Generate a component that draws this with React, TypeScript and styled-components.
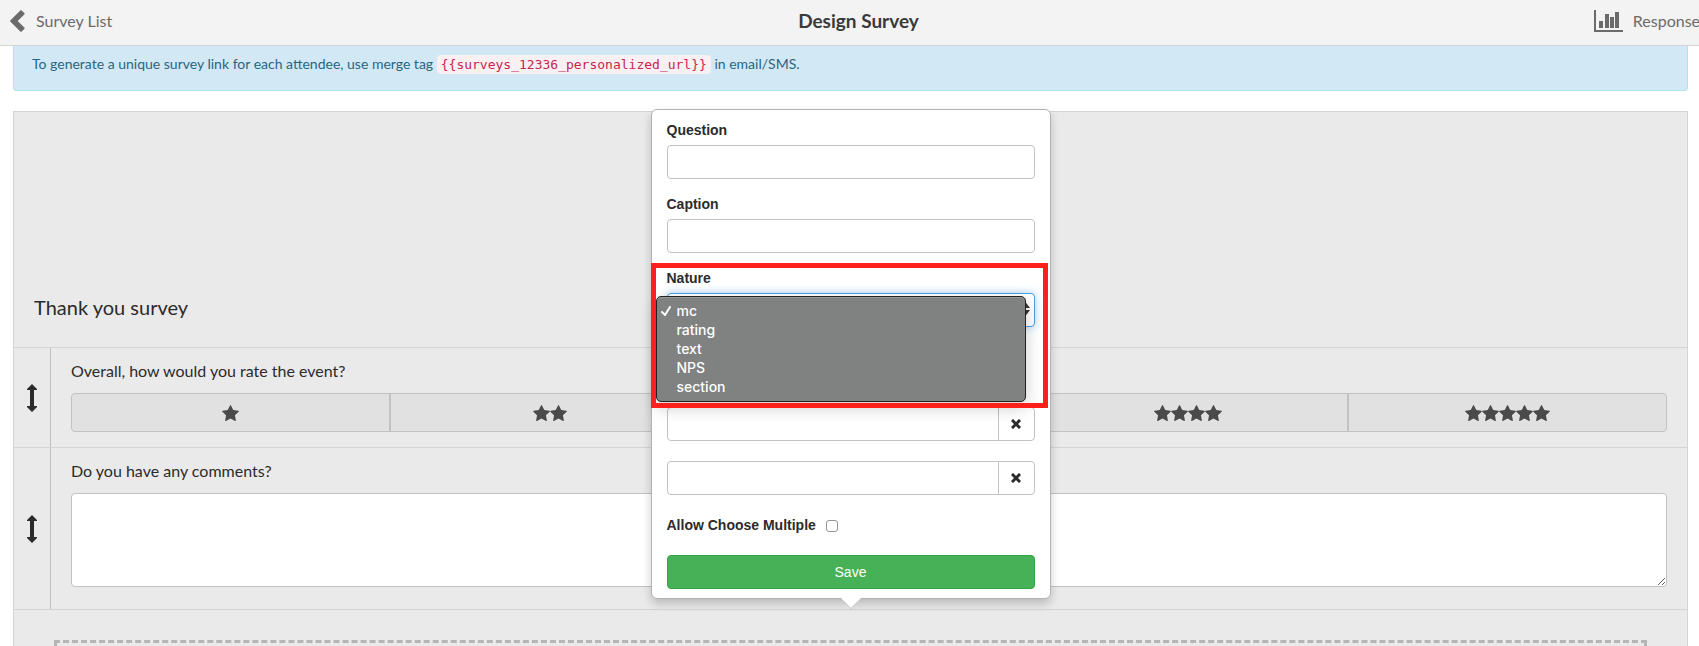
import React from 'react';
import styled, { createGlobalStyle, css } from 'styled-components';

const GlobalStyle = createGlobalStyle`
  *, *::before, *::after { box-sizing: border-box; }
  body {
    margin: 0;
    background: #fff;
    color: #2b2b2b;
    font-family: Lato, "Liberation Sans", sans-serif;
    font-size: 16px;
    line-height: 20px;
  }
`;

const Page = styled.div`
  height: 100vh;
  overflow: hidden;
  display: flex;
  flex-direction: column;
`;

const Header = styled.header`
  flex: none;
  display: grid;
  grid-template-columns: 1fr auto 1fr;
  align-items: center;
  width: calc(100% + 18px);
  height: 46px;
  padding: 0 10px 4px;
  background: #f3f3f3;
  border-bottom: 1px solid #d4d4d4;
  z-index: 3;
`;

const NavLink = styled.a<{ $end?: boolean }>`
  justify-self: ${(p) => (p.$end ? 'end' : 'start')};
  display: flex;
  align-items: center;
  gap: ${(p) => (p.$end ? 10 : 11)}px;
  color: #6b6b6b;
  text-decoration: none;
  svg { display: block; fill: #6b6b6b; }
`;

const Title = styled.h1`
  margin: 0;
  font-size: 19px;
  line-height: 24px;
  font-weight: 700;
  color: #3a3a3a;
`;

const Content = styled.main`
  flex: 1;
  min-height: 0;
  display: flex;
  flex-direction: column;
  justify-content: flex-start;
  padding: 0 11px 0 13px;
`;

const Notice = styled.section`
  flex: none;
  margin-bottom: 20px;
  padding: 8px 18px 15px;
  background: #d2e9f5;
  border: 1px solid #b0e3ec;
  border-top: 0;
  border-radius: 0 0 4px 4px;
  color: #276582;
  font-size: 14px;
  line-height: 20px;
  p { margin: 0; }
  code {
    padding: 2px 4px;
    border-radius: 4px;
    background: #f9f0f3;
    color: #c7254e;
    font-family: "DejaVu Sans Mono", "Liberation Mono", monospace;
    font-size: 13px;
  }
`;

const Panel = styled.section`
  flex: none;
  background: #eaeaea;
  border: 1px solid #d4d4d4;
`;

const PanelHeading = styled.h2`
  margin: 0;
  padding: 183px 20px 27px;
  font-size: 20px;
  line-height: 25px;
  font-weight: 400;
`;

const Row = styled.div`
  display: flex;
  border-top: 1px solid #d4d4d4;
`;

const Handle = styled.button`
  flex: none;
  width: 37px;
  display: grid;
  place-items: center;
  padding: 0;
  border: 0;
  border-right: 1px solid #bfbfbf;
  background: none;
  cursor: move;
  svg { display: block; fill: #2b2b2b; }
`;

const RowBody = styled.div<{ $tall?: boolean }>`
  flex: 1;
  padding: 13px 20px ${(p) => (p.$tall ? 22 : 15)}px;
`;

const Prompt = styled.label`
  display: block;
  margin-bottom: 12px;
  line-height: 20px;
`;

const RatingBar = styled.div`
  display: flex;
  border: 1px solid #c2c2c2;
  border-radius: 4px;
  background: #e1e1e1;
  overflow: hidden;
`;

const RatingButton = styled.button`
  flex: 1;
  display: flex;
  align-items: center;
  justify-content: center;
  height: 37px;
  padding: 0;
  border: 0;
  background: none;
  & + & { border-left: 2px solid #c2c2c2; }
  svg { display: block; fill: #4a4a4a; }
`;

const Comments = styled.textarea`
  display: block;
  width: 100%;
  height: 94px;
  border: 1px solid #c2c2c2;
  border-radius: 4px;
  background: #fff;
  resize: vertical;
`;

const AddRow = styled.div`
  padding: 30px 40px;
  border-top: 1px solid #d4d4d4;
`;

const DropZone = styled.div`
  position: relative;
  height: 100px;
  border: 3px dashed #b5b5b5;
`;

const Popover = styled.form`
  position: absolute;
  left: 50%;
  bottom: calc(100% + 44px);
  width: 400px;
  margin-left: -200px;
  padding: 10px 15px 9px;
  display: flex;
  flex-direction: column;
  background: #fff;
  border: 1px solid #b3b3b3;
  border-radius: 6px;
  box-shadow: 0 5px 10px rgba(0, 0, 0, 0.2);
  font-family: "Liberation Sans", sans-serif;
  font-size: 14px;
  line-height: 20px;
  &::after {
    content: '';
    position: absolute;
    top: 100%;
    left: 50%;
    margin-left: -10px;
    border: 10px solid transparent;
    border-bottom: 0;
    border-top-color: #fff;
    filter: drop-shadow(0 1px 0 #c4c4c4);
  }
`;

const Field = styled.div`
  display: flex;
  flex-direction: column;
  gap: 5px;
  margin-bottom: 15px;
`;

const FieldLabel = styled.label`
  font-weight: 700;
`;

const control = css`
  width: 100%;
  height: 34px;
  padding: 6px 12px;
  border: 1px solid #c2c2c2;
  border-radius: 4px;
  background: #fff;
  font: inherit;
  color: #444;
`;

const TextInput = styled.input`
  ${control}
`;

const SelectWrap = styled.div`
  position: relative;
  > svg { position: absolute; right: 5px; top: 9px; fill: #333; }
`;

const NatureSelect = styled.select`
  ${control}
  display: block;
  appearance: none;
  border-color: #4a9fe0;
  box-shadow: 0 0 8px rgba(102, 175, 233, 0.6);
`;

const Highlight = styled.div`
  position: absolute;
  z-index: 2;
  left: -16px;
  right: -13px;
  top: -30px;
  height: 145px;
  border: 5px solid #ff201a;
  pointer-events: none;
`;

const Menu = styled.ul`
  position: absolute;
  z-index: 1;
  top: 3px;
  left: -11px;
  right: 9px;
  margin: 0;
  padding: 4px 0 5px;
  list-style: none;
  background: #808181;
  border: 1px solid #222;
  border-radius: 5px;
  box-shadow: inset 0 1px 0 #9b9b9b, 0 6px 16px rgba(0, 0, 0, 0.2);
  color: #fff;
  font-family: Inter, "Liberation Sans", sans-serif;
  font-weight: 500;
`;

const MenuItem = styled.li`
  display: grid;
  grid-template-columns: 16px 1fr;
  align-items: center;
  height: 19px;
  padding-left: 4px;
  svg { display: block; }
  span { grid-column: 2; }
`;

const Choices = styled.div`
  display: flex;
  flex-direction: column;
  gap: 20px;
  margin: 65px 0 20px;
`;

const Choice = styled.div`
  display: flex;
  ${TextInput} { border-radius: 4px 0 0 4px; }
`;

const RemoveButton = styled.button`
  flex: none;
  width: 37px;
  height: 34px;
  margin-left: -1px;
  display: grid;
  place-items: center;
  padding: 0;
  border: 1px solid #c2c2c2;
  border-radius: 0 4px 4px 0;
  background: #fff;
  svg { display: block; }
`;

const CheckLine = styled.label`
  display: flex;
  align-items: center;
  gap: 10px;
  margin-bottom: 20px;
  font-weight: 700;
  input {
    appearance: none;
    width: 12px;
    height: 12px;
    margin: 1px 0 0;
    border: 1px solid #949494;
    border-radius: 3px;
    background: #fff;
  }
`;

const SaveButton = styled.button`
  height: 34px;
  padding: 0;
  border: 1px solid #35a64a;
  border-radius: 4px;
  background: #47b158;
  color: #fff;
  font: inherit;
`;

const Star = () => (
  <svg width="17" height="16" viewBox="0 0 1664 1587" aria-hidden="true">
    <path d="M1664 615q0 22-26 48l-363 354 86 500q1 7 1 20 0 21-10.500 35.500t-30.500 14.500q-19 0-40-12l-449-236-449 236q-22 12-40 12-21 0-31.500-14.500t-10.500-35.500q0-6 2-20l86-500-364-354q-25-27-25-48 0-37 56-46l502-73 225-455q19-41 49-41t49 41l225 455 502 73q56 9 56 46z" />
  </svg>
);

const DragArrow = () => (
  <svg width="10" height="28" viewBox="0 0 10 28" aria-hidden="true">
    <path d="M5 0 10 5v1H7v16h3v1l-5 5-5-5v-1h3V6H0V5z" />
  </svg>
);

const Cross = () => (
  <svg width="10" height="10" viewBox="0 0 10 10" aria-hidden="true">
    <path d="M2 2l6 6M8 2l-6 6" stroke="#2b2b2b" strokeWidth="3" strokeLinecap="square" />
  </svg>
);

const ratings = [1, 2, 3, 4, 5];
const natures = ['mc', 'rating', 'text', 'NPS', 'section'];

export default function App() {
  return (
    <Page>
      <GlobalStyle />
      <Header>
        <NavLink href="#surveys">
          <svg width="15" height="22" viewBox="0 0 15 22" aria-hidden="true">
            <path d="M0.500 10.300 10.300 0.500q0.700-0.700 1.400 0l2.600 2.500q0.700 0.700 0 1.400L7.700 11l6.600 6.600q0.700 0.700 0 1.400l-2.600 2.500q-0.700 0.700-1.400 0L0.500 11.700q-0.700-0.700 0-1.400z" />
          </svg>
          Survey List
        </NavLink>
        <Title>Design Survey</Title>
        <NavLink href="#responses" $end>
          <svg width="29" height="22" viewBox="0 0 29 22" aria-hidden="true">
            <path d="M0 0h2v20h27v2H0zM5 11h4v7H5zM11 4h4v14h-4zM16 7h4v11h-4zM21 2h4v16h-4z" />
          </svg>
          Responses
        </NavLink>
      </Header>

      <Content>
        <Notice>
          <p>
            To generate a unique survey link for each attendee, use merge tag{' '}
            <code>{'{{surveys_12336_personalized_url}}'}</code> in email/SMS.
          </p>
        </Notice>

        <Panel>
          <PanelHeading>Thank you survey</PanelHeading>

          <Row>
            <Handle type="button" aria-label="Move question"><DragArrow /></Handle>
            <RowBody>
              <Prompt as="div" id="rate">Overall, how would you rate the event?</Prompt>
              <RatingBar role="group" aria-labelledby="rate">
                {ratings.map((n) => (
                  <RatingButton type="button" key={n} aria-label={String(n)}>
                    {ratings.slice(0, n).map((i) => <Star key={i} />)}
                  </RatingButton>
                ))}
              </RatingBar>
            </RowBody>
          </Row>

          <Row>
            <Handle type="button" aria-label="Move question"><DragArrow /></Handle>
            <RowBody $tall>
              <Prompt htmlFor="comments">Do you have any comments?</Prompt>
              <Comments id="comments" />
            </RowBody>
          </Row>

          <AddRow>
            <DropZone>
              <Popover onSubmit={(e) => e.preventDefault()}>
                <Field>
                  <FieldLabel htmlFor="question">Question</FieldLabel>
                  <TextInput id="question" />
                </Field>
                <Field>
                  <FieldLabel htmlFor="caption">Caption</FieldLabel>
                  <TextInput id="caption" />
                </Field>
                <Field>
                  <FieldLabel htmlFor="nature">Nature</FieldLabel>
                  <SelectWrap>
                    <NatureSelect id="nature" defaultValue="mc">
                      {natures.map((n) => <option key={n}>{n}</option>)}
                    </NatureSelect>
                    <svg width="9" height="14" viewBox="0 0 9 14" aria-hidden="true">
                      <path d="M4.500 0 9 6H0zM0 8h9l-4.500 6z" />
                    </svg>
                    <Menu role="listbox" aria-label="Nature">
                      {natures.map((n, i) => (
                        <MenuItem key={n} role="option" aria-selected={i === 0}>
                          {i === 0 && (
                            <svg width="10" height="10" viewBox="0 0 10 10" aria-hidden="true">
                              <path d="M1 6l3 3 5-8" fill="none" stroke="#fff" strokeWidth="2" strokeLinecap="round" strokeLinejoin="round" />
                            </svg>
                          )}
                          <span>{n}</span>
                        </MenuItem>
                      ))}
                    </Menu>
                    <Highlight />
                  </SelectWrap>
                </Field>
                <Choices>
                  {[1, 2].map((n) => (
                    <Choice key={n}>
                      <TextInput aria-label={`Choice ${n}`} />
                      <RemoveButton type="button" aria-label={`Remove choice ${n}`}><Cross /></RemoveButton>
                    </Choice>
                  ))}
                </Choices>
                <CheckLine>
                  Allow Choose Multiple
                  <input type="checkbox" />
                </CheckLine>
                <SaveButton type="submit">Save</SaveButton>
              </Popover>
            </DropZone>
          </AddRow>
        </Panel>
      </Content>
    </Page>
  );
}
